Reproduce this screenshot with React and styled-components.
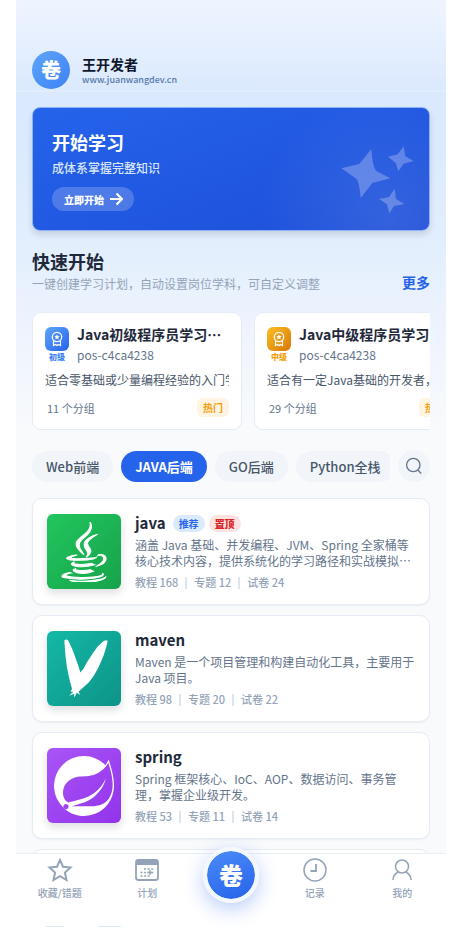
import React, { useState } from 'react';
import styled, { createGlobalStyle, css } from 'styled-components';
import { FaJava } from 'react-icons/fa';
import { SiSpring } from 'react-icons/si';

const Global = createGlobalStyle`
  * { box-sizing: border-box; }
  body {
    margin: 0;
    background: #fff;
    font-family: "Noto Sans CJK SC", sans-serif;
    color: #1e293b;
  }
  h1, h2, h3, p { margin: 0; }
  button { font: inherit; border: 0; padding: 0; cursor: pointer; }
  a { text-decoration: none; color: inherit; }
`;

const Page = styled.div`
  height: 100vh;
  padding: 0 18px 5px 16px;
  display: flex;
  flex-direction: column;
`;

const Shell = styled.div`
  flex: 1;
  min-height: 0;
  display: flex;
  flex-direction: column;
  background: #f8fafc;
`;

const Header = styled.header`
  display: flex;
  align-items: center;
  gap: 12px;
  padding: 51px 16px 1px;
  border-bottom: 2px solid #e1edfe;
  background: linear-gradient(180deg, #eff5ff 0%, #dbe9fe 100%);
`;

const Avatar = styled.div`
  width: 38px;
  height: 38px;
  border-radius: 50%;
  display: grid;
  place-items: center;
  font-size: 20px;
  line-height: 20px;
  font-weight: 900;
  color: #fff;
  background: linear-gradient(135deg, #60a5fa, #3b82f6);
`;

const UserName = styled.h1`
  font-size: 14px;
  line-height: 18px;
  font-weight: 700;
  color: #0f172a;
`;

const Site = styled.a`
  display: block;
  font-size: 9px;
  line-height: 13px;
  font-weight: 500;
  && { color: #5577aa; }
`;

const Main = styled.main`
  flex: 1;
  min-height: 0;
  overflow-y: auto;
  scrollbar-width: none;
  padding: 15px 16px 0;
  background: linear-gradient(180deg, #dbe9fe 0, #dbeafe 60px, #e3effd 160px, #edf3fe 230px, #f8fafc 335px);
`;

const Banner = styled.section`
  display: flex;
  align-items: flex-end;
  justify-content: space-between;
  padding: 23px 14px 15px 19px;
  border: 1px solid #8db2f8;
  border-radius: 8px;
  color: #fff;
  background:
    radial-gradient(circle at 90% 90%, rgba(255, 255, 255, 0.1) 0, rgba(255, 255, 255, 0) 130px),
    linear-gradient(160deg, #2563eb, #1d4ed8);
  box-shadow: 0 4px 6px rgba(15, 23, 42, 0.13);
`;

const BannerCopy = styled.div`
  padding-bottom: 4px;
`;

const BannerTitle = styled.h2`
  font-size: 18px;
  line-height: 22px;
  font-weight: 700;
`;

const BannerText = styled.p`
  margin-top: 5px;
  font-size: 12px;
  line-height: 20px;
  font-weight: 500;
  color: #dbe7fd;
`;

const StartButton = styled.button`
  display: flex;
  align-items: center;
  gap: 5px;
  height: 24px;
  margin-top: 9px;
  && { padding: 0 11px 0 12px; }
  border-radius: 12px;
  font-size: 10px;
  font-weight: 900;
  color: #fff;
  background: rgba(255, 255, 255, 0.2);
`;

const SectionHead = styled.div`
  display: flex;
  align-items: flex-end;
  justify-content: space-between;
  margin-top: 17px;
`;

const SectionTitle = styled.h2`
  font-size: 18px;
  line-height: 26px;
  font-weight: 700;
`;

const SectionText = styled.p`
  margin-top: 1px;
  font-size: 12px;
  line-height: 18px;
  color: #94a3b8;
`;

const MoreLink = styled.a`
  font-size: 14px;
  line-height: 22px;
  font-weight: 700;
  && { color: #2563eb; }
`;

const PlanRow = styled.div`
  display: flex;
  gap: 12px;
  margin-top: 19px;
  overflow-x: auto;
  scrollbar-width: none;
`;

const PlanCard = styled.article`
  flex: none;
  width: 210px;
  padding: 10px 12px 12px;
  border: 1px solid #e6ecf5;
  border-radius: 9px;
  background: #fff;
`;

const PlanTop = styled.div`
  display: flex;
  gap: 8px;
`;

const LevelBox = styled.div`
  flex: none;
  display: flex;
  flex-direction: column;
  align-items: center;
  padding-top: 4px;
  font-size: 8px;
  line-height: 12px;
  font-weight: 900;
  color: ${(p) => (p.$tone === 'blue' ? '#3b82f6' : '#f59e0b')};
`;

const LevelIcon = styled.span`
  width: 24px;
  height: 24px;
  border-radius: 6px;
  display: grid;
  place-items: center;
  background: ${(p) => (p.$tone === 'blue'
    ? 'linear-gradient(135deg, #60a5fa, #2563eb)'
    : 'linear-gradient(135deg, #fbbf24, #d97706)')};
`;

const PlanInfo = styled.div`
  min-width: 0;
  padding-right: 6px;
`;

const PlanTitle = styled.h3`
  font-size: 14px;
  line-height: 22px;
  font-weight: 700;
  white-space: nowrap;
  overflow: hidden;
  text-overflow: ellipsis;
`;

const PlanId = styled.p`
  font-size: 12px;
  line-height: 20px;
  color: #64748b;
`;

const PlanText = styled.p`
  margin-top: 6px;
  font-size: 12px;
  line-height: 18px;
  color: #475569;
  white-space: nowrap;
  overflow: hidden;
`;

const PlanFoot = styled.div`
  display: flex;
  align-items: center;
  justify-content: space-between;
  margin-top: 9px;
  padding-left: 2px;
  font-size: 11px;
  line-height: 18px;
  color: #64748b;
`;

const Hot = styled.span`
  padding: 0 6px;
  border-radius: 6px;
  font-size: 10px;
  line-height: 19px;
  font-weight: 700;
  color: #f59e0b;
  background: #fff3e2;
`;

const Filter = styled.div`
  display: flex;
  align-items: center;
  gap: 8px;
  margin-top: 20px;
`;

const Tabs = styled.div`
  flex: 1;
  min-width: 0;
  display: flex;
  gap: 8px;
  overflow-x: auto;
  scrollbar-width: none;
`;

const Tab = styled.button`
  flex: none;
  height: 31px;
  && { padding: 0 14px; }
  border-radius: 16px;
  font-size: 13px;
  font-weight: 500;
  color: #475569;
  background: #f1f5f9;
  ${(p) => p.$active && css`
    font-weight: 700;
    color: #fff;
    background: #2563eb;
  `}
`;

const SearchButton = styled.button`
  flex: none;
  width: 32px;
  height: 32px;
  border-radius: 50%;
  display: grid;
  place-items: center;
  color: #64748b;
  background: #f1f5f9;
`;

const List = styled.div`
  display: grid;
  gap: 10px;
  margin-top: 16px;
`;

const Course = styled.article`
  display: flex;
  gap: 14px;
  padding: 14px;
  border: 1px solid #e6ecf5;
  border-radius: 10px;
  background: #fff;
  box-shadow: 0 1px 2px rgba(15, 23, 42, 0.05);
`;

const Cover = styled.div`
  flex: none;
  width: 74px;
  height: 75px;
  margin: 1px 0;
  border-radius: 6px;
  display: grid;
  place-items: center;
  color: #fff;
  background: linear-gradient(135deg, ${(p) => p.$from}, ${(p) => p.$to});
  box-shadow: 0 4px 8px rgba(15, 23, 42, 0.14);
`;

const CourseBody = styled.div`
  flex: 1;
  min-width: 0;
`;

const CourseHead = styled.div`
  display: flex;
  align-items: center;
  gap: 4px;
`;

const CourseTitle = styled.h3`
  margin-right: 3px;
  font-size: 15px;
  line-height: 20px;
  font-weight: 700;
`;

const Tag = styled.span`
  padding: 0 6px;
  border-radius: 9px;
  font-size: 10px;
  line-height: 17px;
  font-weight: ${(p) => (p.$tone === 'red' ? 900 : 700)};
  color: ${(p) => (p.$tone === 'red' ? '#dc2626' : '#2563eb')};
  background: ${(p) => (p.$tone === 'red' ? '#fee2e2' : '#dbeafe')};
`;

const CourseText = styled.p`
  display: -webkit-box;
  -webkit-box-orient: vertical;
  -webkit-line-clamp: 2;
  overflow: hidden;
  margin-top: 4px;
  font-size: 12px;
  line-height: 16px;
  color: #64748b;
`;

const Stats = styled.div`
  display: flex;
  gap: 7px;
  margin-top: 5px;
  font-size: 11px;
  line-height: 16px;
  font-weight: 500;
  color: #94a3b8;
`;

const Bar = styled.span`
  width: 2px;
  height: 12px;
  margin-top: 3px;
  background: #dde5ef;
`;

const Nav = styled.nav`
  flex: none;
  display: grid;
  grid-template-columns: 1fr 1fr 80px 1fr 1fr;
  padding-bottom: 26px;
  border-top: 1px solid #e8eef7;
  background: #fff;
  z-index: 1;
`;

const NavItem = styled.a`
  display: flex;
  flex-direction: column;
  align-items: center;
  gap: 2px;
  padding-top: 3px;
  font-size: 10px;
  line-height: 15px;
  font-weight: 500;
  && { color: #94a3b8; }
`;

const HomeButton = styled.button`
  justify-self: center;
  width: 56px;
  height: 56px;
  margin: -7px 0 -3px;
  && { border: 4px solid #f3f8ff; }
  border-radius: 50%;
  font-size: 24px;
  line-height: 24px;
  font-weight: 900;
  color: #fff;
  background: linear-gradient(160deg, #4b8bf7, #2563eb) padding-box;
  box-shadow: 0 6px 20px rgba(37, 99, 235, 0.32);
`;

const Peek = styled.div`
  display: flex;
  gap: 34px;
  margin: 0 30px;
`;

const PeekPill = styled.span`
  width: ${(p) => p.$width}px;
  height: 1px;
  background: #dbe8fb;
`;

const Sparkles = () => (
  <svg width="75" height="70" viewBox="330 150 225 210" fill="#fff" fillOpacity="0.25" aria-hidden="true">
    <path d="M424 162 Q428 218 439 228L481 250 427 264 392 309Q388 262 380 252L334 220 388 207Z" />
    <path d="M521 154 526 184 551 198 521 206 505 228 497 204 474 185 503 178Z" />
    <path d="M494 281 498 312 523 327 492 333 478 355 471 328 447 312 477 306Z" />
  </svg>
);

const Arrow = () => (
  <svg width="14" height="14" viewBox="0 0 14 14" fill="none" stroke="#fff" strokeWidth="2.2" aria-hidden="true">
    <path d="M1 7h11M7.500 1.500 13 7l-5.500 5.500" strokeLinejoin="round" />
  </svg>
);

const Medal = () => (
  <svg width="14" height="16" viewBox="0 0 14 16" fill="none" stroke="#fff" aria-hidden="true">
    <circle cx="7" cy="6" r="4.700" strokeWidth="1.300" />
    <path d="M3.500 9.500V14.500L5.500 13.500 7 14.500 8.500 13.500 10.500 14.500V9.500" strokeWidth="1.200" />
    <path d="M7 3.400 7.800 5.100 9.600 5.300 8.300 6.600 8.600 8.400 7 7.500 5.400 8.400 5.700 6.600 4.400 5.300 6.200 5.100Z" fill="#fff" stroke="none" />
  </svg>
);

const SearchIcon = () => (
  <svg width="18" height="18" viewBox="0 0 18 18" fill="none" stroke="currentColor" strokeWidth="1.300" aria-hidden="true">
    <circle cx="8.300" cy="8" r="6.700" />
    <path d="M12.800 13 16.200 16.500" />
  </svg>
);

const LeafMark = () => (
  <svg width="74" height="75" viewBox="93 81 222 222" fill="#fff" aria-hidden="true">
    <path d="M145 108Q151 101 157 109L168 132 177 156 187 184 193 204 203 192 211 176 232 144 245 126 260 112Q269 104 275 109L271 127 262 155 247 190 232 216 218 234 204 247 188 261 192 271 182 265 175 279 174 268 159 274 172 262 164 262 168 253 161 227 153 190 148 150Z" />
  </svg>
);

const StarIcon = () => (
  <svg width="26" height="26" viewBox="0 0 26 26" fill="none" stroke="currentColor" strokeWidth="2" aria-hidden="true">
    <path d="M13 3 16 9.700 23.500 10.500 17.900 15.500 19.500 23 13 19.200 6.500 23 8.100 15.500 2.500 10.500 10 9.700Z" />
  </svg>
);

const CalendarIcon = () => (
  <svg width="26" height="26" viewBox="0 0 26 26" aria-hidden="true">
    <rect x="2" y="3" width="22" height="20" rx="2.500" fill="none" stroke="currentColor" strokeWidth="1.800" />
    <path d="M2 8V5Q2 3 4 3H22Q24 3 24 5V8Z" fill="currentColor" />
    <path d="M10 12h10M6.500 15.500h13.500M6.500 19h10" stroke="currentColor" strokeWidth="1.600" strokeDasharray="2 1.600" />
    <path d="M13.500 15.500h5M16 13v5" stroke="currentColor" strokeWidth="1.300" />
  </svg>
);

const ClockIcon = () => (
  <svg width="26" height="26" viewBox="0 0 26 26" fill="none" stroke="currentColor" aria-hidden="true">
    <circle cx="13" cy="13" r="11" strokeWidth="1.500" />
    <path d="M14 7V14H8.500" strokeWidth="1.800" />
  </svg>
);

const PersonIcon = () => (
  <svg width="26" height="26" viewBox="0 0 26 26" fill="none" stroke="currentColor" strokeWidth="1.500" aria-hidden="true">
    <circle cx="13" cy="9.500" r="6.500" />
    <path d="M4 23Q4 17.500 9.500 15M22 23Q22 17.500 16.500 15" />
  </svg>
);

const plans = [
  { tone: 'blue', level: '初级', title: 'Java初级程序员学习计划', text: '适合零基础或少量编程经验的入门学习者', groups: 11 },
  { tone: 'amber', level: '中级', title: 'Java中级程序员学习计划', text: '适合有一定Java基础的开发者，进阶提升', groups: 29 },
];

const tabs = ['Web前端', 'JAVA后端', 'GO后端', 'Python全栈'];

const courses = [
  {
    name: 'java', from: '#22c55e', to: '#16a34a',
    icon: <FaJava size={60} stroke="currentColor" strokeWidth={9} />,
    tags: [['blue', '推荐'], ['red', '置顶']],
    text: '涵盖 Java 基础、并发编程、JVM、Spring 全家桶等核心技术内容，提供系统化的学习路径和实战模拟训练。',
    stats: [168, 12, 24],
  },
  {
    name: 'maven', from: '#14b8a6', to: '#0d9488', icon: <LeafMark />, tags: [],
    text: 'Maven 是一个项目管理和构建自动化工具，主要用于 Java 项目。',
    stats: [98, 20, 22],
  },
  {
    name: 'spring', from: '#a855f7', to: '#9333ea', icon: <SiSpring size={60} />, tags: [],
    text: 'Spring 框架核心、IoC、AOP、数据访问、事务管理，掌握企业级开发。',
    stats: [53, 11, 14],
  },
  {
    name: 'mybatis', from: '#60a5fa', to: '#2563eb', icon: null, tags: [],
    text: 'MyBatis 持久层框架。',
    stats: [40, 10, 12],
  },
];

export default function App() {
  const [active, setActive] = useState('JAVA后端');
  return (
    <>
      <Global />
      <Page>
        <Shell>
          <Header>
            <Avatar>卷</Avatar>
            <div>
              <UserName>王开发者</UserName>
              <Site href="#site">www.juanwangdev.cn</Site>
            </div>
          </Header>
          <Main>
            <Banner>
              <BannerCopy>
                <BannerTitle>开始学习</BannerTitle>
                <BannerText>成体系掌握完整知识</BannerText>
                <StartButton type="button">立即开始<Arrow /></StartButton>
              </BannerCopy>
              <Sparkles />
            </Banner>
            <SectionHead>
              <div>
                <SectionTitle>快速开始</SectionTitle>
                <SectionText>一键创建学习计划，自动设置岗位学科，可自定义调整</SectionText>
              </div>
              <MoreLink href="#more">更多</MoreLink>
            </SectionHead>
            <PlanRow>
              {plans.map((p) => (
                <PlanCard key={p.level}>
                  <PlanTop>
                    <LevelBox $tone={p.tone}>
                      <LevelIcon $tone={p.tone}><Medal /></LevelIcon>
                      {p.level}
                    </LevelBox>
                    <PlanInfo>
                      <PlanTitle>{p.title}</PlanTitle>
                      <PlanId>pos-c4ca4238</PlanId>
                    </PlanInfo>
                  </PlanTop>
                  <PlanText>{p.text}</PlanText>
                  <PlanFoot>
                    <span>{p.groups} 个分组</span>
                    <Hot>热门</Hot>
                  </PlanFoot>
                </PlanCard>
              ))}
            </PlanRow>
            <Filter>
              <Tabs>
                {tabs.map((t) => (
                  <Tab key={t} type="button" $active={t === active} onClick={() => setActive(t)}>{t}</Tab>
                ))}
              </Tabs>
              <SearchButton type="button" aria-label="搜索"><SearchIcon /></SearchButton>
            </Filter>
            <List>
              {courses.map((c) => (
                <Course key={c.name}>
                  <Cover $from={c.from} $to={c.to}>{c.icon}</Cover>
                  <CourseBody>
                    <CourseHead>
                      <CourseTitle>{c.name}</CourseTitle>
                      {c.tags.map(([tone, label]) => <Tag key={label} $tone={tone}>{label}</Tag>)}
                    </CourseHead>
                    <CourseText>{c.text}</CourseText>
                    <Stats>
                      <span>教程 {c.stats[0]}</span>
                      <Bar />
                      <span>专题 {c.stats[1]}</span>
                      <Bar />
                      <span>试卷 {c.stats[2]}</span>
                    </Stats>
                  </CourseBody>
                </Course>
              ))}
            </List>
          </Main>
          <Nav>
            <NavItem href="#favorites"><StarIcon />收藏/错题</NavItem>
            <NavItem href="#plan"><CalendarIcon />计划</NavItem>
            <HomeButton type="button">卷</HomeButton>
            <NavItem href="#records"><ClockIcon />记录</NavItem>
            <NavItem href="#me"><PersonIcon />我的</NavItem>
          </Nav>
        </Shell>
        <Peek>
          <PeekPill $width={18} />
          <PeekPill $width={23} />
        </Peek>
      </Page>
    </>
  );
}
